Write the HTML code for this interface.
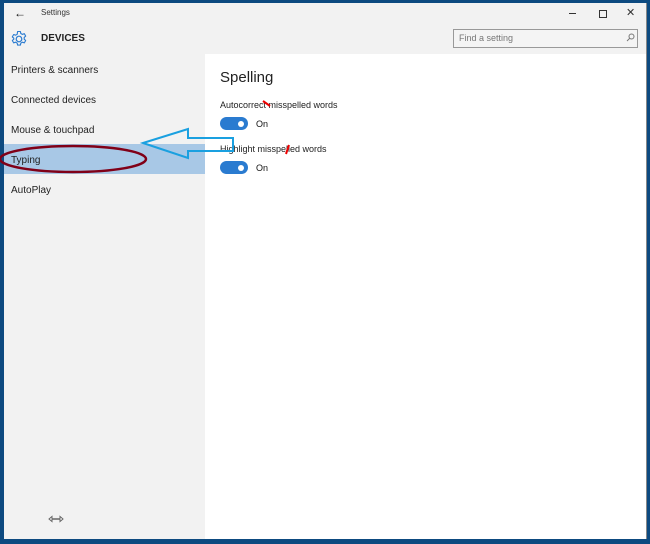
<!DOCTYPE html>
<html><head><style>
body{margin:0;width:650px;height:544px;background:#0d4a80;position:relative;overflow:hidden;font-family:"Liberation Sans",sans-serif;}
.win{position:absolute;left:4px;top:3px;width:642px;height:536px;background:#fff;border-right:1px solid #888;}
.top{position:absolute;left:0;top:0;width:642px;height:51px;background:#f2f2f2;}
.side{position:absolute;left:0;top:51px;width:201px;height:485px;background:#f2f2f2;}
.t{position:absolute;white-space:nowrap;color:#111;}
.item{position:absolute;left:7px;font-size:10px;color:#222;}
.tog{position:absolute;left:216px;width:28px;height:13px;border-radius:7px;background:#2a7bd0;}
.tog:after{content:"";position:absolute;right:4px;top:3.5px;width:6px;height:6px;border-radius:50%;background:#fff;}
</style></head><body>
<div class="win">
<div class="top"></div>
<div class="side"></div>
<div style="position:absolute;left:0;top:141px;width:201px;height:30px;background:#a8c8e6"></div>
<div class="t" style="left:10px;top:3px;font-size:12px">&#8592;</div>
<div class="t" style="left:37px;top:5px;font-size:8px;color:#333">Settings</div>
<svg style="position:absolute;left:6px;top:27px" width="18" height="18" viewBox="0 0 18 18"><circle cx="9" cy="9" r="2.8" fill="none" stroke="#2a7bd0" stroke-width="1.2"/><path d="M7.6 1.5h2.8l.4 2 1.6.9 1.9-.7 1.4 2.4-1.5 1.3v1.8l1.5 1.3-1.4 2.4-1.9-.7-1.6.9-.4 2H7.6l-.4-2-1.6-.9-1.9.7-1.4-2.4 1.5-1.3V8.2L2.3 6.9l1.4-2.4 1.9.7 1.6-.9z" fill="none" stroke="#2a7bd0" stroke-width="1.1" stroke-linejoin="round"/></svg>
<div class="t" style="left:37px;top:30px;font-size:10px;font-weight:bold;color:#222">DEVICES</div>
<div style="position:absolute;left:565px;top:10px;width:7px;height:1px;background:#333"></div>
<div style="position:absolute;left:595px;top:7px;width:6px;height:6px;border:1px solid #333"></div>
<div class="t" style="left:622px;top:3px;font-size:11px;color:#333">&#10005;</div>
<div style="position:absolute;left:449px;top:26px;width:183px;height:17px;border:1px solid #999;background:#f4f4f4"></div>
<div class="t" style="left:455px;top:30px;font-size:9px;color:#777">Find a setting</div>
<svg style="position:absolute;left:622px;top:30px" width="9" height="9"><circle cx="5.5" cy="3.5" r="2.5" fill="none" stroke="#777"/><path d="M4 5L1 8" stroke="#777"/></svg>
<div class="item" style="top:62px">Printers &amp; scanners</div>
<div class="item" style="top:92px">Connected devices</div>
<div class="item" style="top:122px">Mouse &amp; touchpad</div>
<div class="item" style="top:152px">Typing</div>
<div class="item" style="top:182px">AutoPlay</div>
<svg style="position:absolute;left:44px;top:512px" width="16" height="8"><path d="M1 4L4 1.5V6.5Z M15 4L12 1.5V6.5Z" fill="#fff" stroke="#666"/><path d="M4 4H12" stroke="#666" stroke-width="1.5"/></svg>
<div class="t" style="left:216px;top:66px;font-size:15px;color:#222">Spelling</div>
<div class="t" style="left:216px;top:97px;font-size:9px;color:#222">Autocorrect misspelled words</div>
<div class="tog" style="top:114px"></div>
<div class="t" style="left:252px;top:116px;font-size:9px">On</div>
<div class="t" style="left:216px;top:141px;font-size:9px;color:#222">Highlight misspelled words</div>
<div class="tog" style="top:158px"></div>
<div class="t" style="left:252px;top:160px;font-size:9px">On</div>
</div>
<svg style="position:absolute;left:0;top:0" width="650" height="544">
<path d="M263 101 L270 106" stroke="#e00" stroke-width="2"/>
<path d="M289 145 L286 154" stroke="#e00" stroke-width="2"/>
<path d="M143 143 L188 129 L188 138 L233 138 L233 151 L188 151 L188 158 Z" fill="none" stroke="#1aa0e0" stroke-width="2"/>
<ellipse cx="73" cy="159" rx="73" ry="13" fill="none" stroke="#800018" stroke-width="2.5"/>
</svg>
</body></html>
